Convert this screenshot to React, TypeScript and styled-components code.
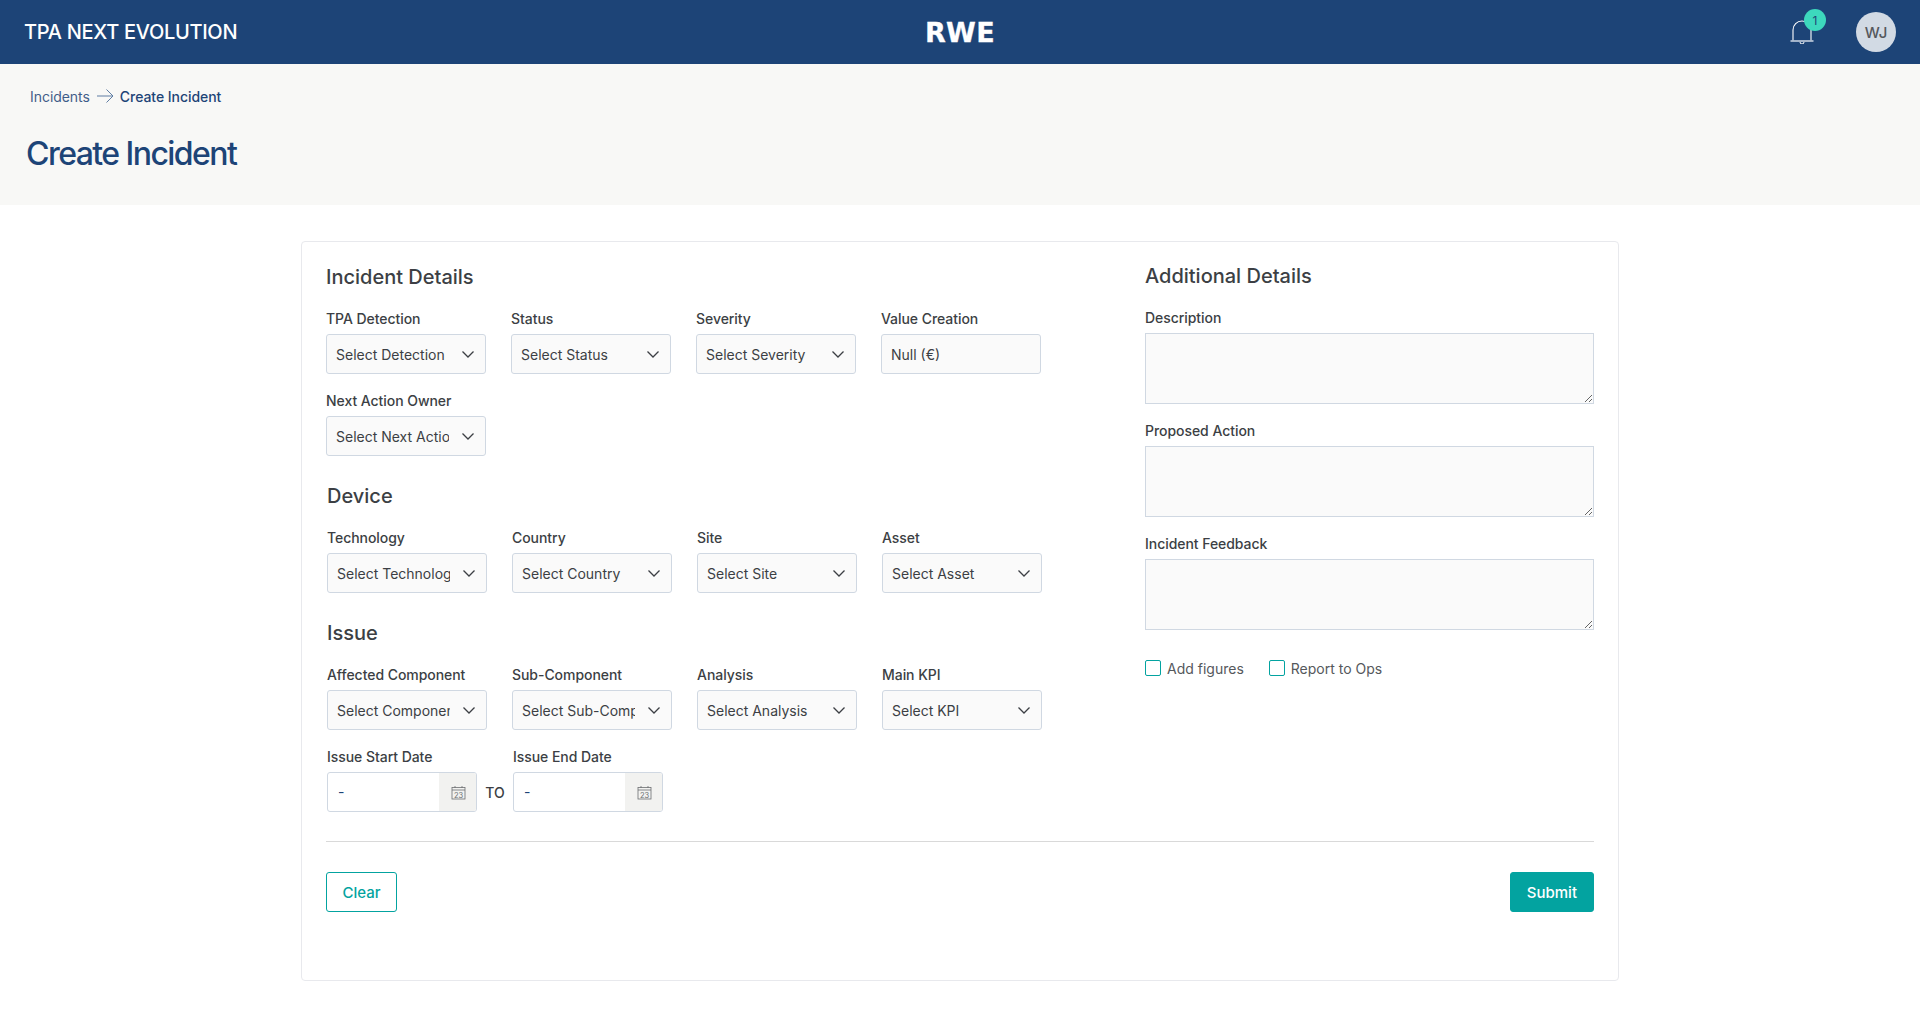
import React from "react";
import styled, { createGlobalStyle } from "styled-components";

const Global = createGlobalStyle`
  html, body { margin: 0; padding: 0; background: #fff; }
  body { font-family: Inter, "Noto Sans", sans-serif; color: #3c3f44; }
  * { box-sizing: border-box; }
`;

const TopBar = styled.header`
  height: 64px;
  background: #1d4477;
  display: grid;
  grid-template-columns: 1fr auto 1fr;
  align-items: center;
  padding: 0 24px;
  color: #fff;
`;
const AppName = styled.div`
  font-size: 20px;
  font-weight: 500;
  letter-spacing: -0.3px;
`;
const Logo = styled.div`
  font-family: "DejaVu Sans", sans-serif;
  font-size: 27px;
  font-weight: 700;
  letter-spacing: 0.3px;
  line-height: 1;
  -webkit-text-stroke: 0.3px #fff;
`;
const TopActions = styled.div`
  display: flex;
  justify-content: flex-end;
  align-items: center;
  gap: 41px;
`;
const BellWrap = styled.div`
  position: relative;
  width: 24px;
  height: 24px;
  margin-right: 1px;
`;
const Badge = styled.span`
  position: absolute;
  left: 14px;
  top: -1px;
  width: 22px;
  height: 22px;
  margin-top: -10px;
  border-radius: 50%;
  background: #3dd8bd;
  color: #1d4477;
  font-size: 12px;
  display: flex;
  align-items: center;
  justify-content: center;
`;
const Avatar = styled.div`
  width: 40px;
  height: 40px;
  border-radius: 50%;
  background: #d2dae4;
  color: #55585c;
  font-size: 15px;
  font-weight: 500;
  display: flex;
  align-items: center;
  justify-content: center;
`;
const PageHead = styled.section`
  height: 141px;
  background: #f8f8f6;
  padding: 23px 26px 0;
`;
const Crumbs = styled.nav`
  display: flex;
  align-items: center;
  height: 18px;
  margin-left: 4px;
  font-size: 14px;
  letter-spacing: -0.05px;
  color: #1d4477;
`;
const CrumbLink = styled.span`
  font-weight: 400;
  opacity: 0.85;
`;
const CrumbCurrent = styled.span`
  font-weight: 500;
`;
const CrumbArrow = styled.svg`
  width: 18px;
  height: 18px;
  margin: 0 6px;
`;
const Title = styled.h1`
  margin: 29px 0 0;
  font-size: 32px;
  line-height: 40px;
  font-weight: 500;
  letter-spacing: -1.55px;
  color: #1d4477;
`;
const Card = styled.form`
  width: 1318px;
  height: 740px;
  margin: 36px 0 0 301px;
  padding: 22px 24px 0;
  border: 1px solid #e8e9ed;
  border-radius: 4px;
  background: #fff;
`;
const Columns = styled.div`
  display: grid;
  grid-template-columns: 819px 449px;
  height: 577px;
`;
const LeftCol = styled.div`
  display: flex;
  flex-direction: column;
  padding-top: 1px;
`;
const RightCol = styled.div`
  display: flex;
  flex-direction: column;
`;
const Section = styled.div<{ $inset?: boolean; $gap?: number }>`
  padding-left: ${(p) => (p.$inset ? 1 : 0)}px;
  margin-top: ${(p) => p.$gap ?? 0}px;
`;
const SectionTitle = styled.h2`
  margin: 0 0 21px;
  font-size: 20px;
  line-height: 24px;
  font-weight: 500;
  color: #3c3f44;
`;
const Row = styled.div`
  display: grid;
  grid-template-columns: repeat(4, 160px);
  column-gap: 25px;
  row-gap: 18px;
`;
const Field = styled.div`
  display: flex;
  flex-direction: column;
`;
const Label = styled.label`
  font-size: 14px;
  line-height: 18px;
  height: 18px;
  margin-bottom: 6px;
  font-weight: 500;
  letter-spacing: -0.05px;
  color: #3c3f44;
  white-space: nowrap;
`;
const SelectBox = styled.div`
  height: 40px;
  width: 160px;
  display: flex;
  align-items: center;
  padding: 0 10px 0 9px;
  background: #fafafa;
  border: 1px solid #d0d8e2;
  border-radius: 3px;
  font-size: 14px;
  color: #3c3f44;
`;
const SelectText = styled.span`
  flex: 1;
  min-width: 0;
  overflow: hidden;
  white-space: nowrap;
`;
const Chevron = styled.svg`
  flex: none;
  width: 14px;
  height: 14px;
  margin-left: 12px;
`;
const DateRow = styled.div`
  display: flex;
  align-items: flex-end;
  margin-top: 18px;
`;
const ToText = styled.span`
  width: 36px;
  height: 40px;
  font-size: 14px;
  font-weight: 500;
  display: flex;
  align-items: center;
  justify-content: center;
`;
const DateBox = styled.div`
  width: 150px;
  height: 40px;
  display: flex;
  border: 1px solid #d0d8e2;
  border-radius: 3px;
  overflow: hidden;
  background: #fff;
`;
const DateValue = styled.span`
  flex: 1;
  padding-left: 10px;
  font-size: 14px;
  line-height: 38px;
  color: #1d4477;
`;
const DateAddon = styled.span`
  width: 37px;
  padding-left: 1px;
  background: #f2f2f0;
  display: flex;
  align-items: center;
  justify-content: center;
`;
const RightField = styled.div`
  display: flex;
  flex-direction: column;
  margin-bottom: 18px;
`;
const TextArea = styled.textarea`
  display: block;
  width: 449px;
  height: 71px;
  background: #fafafa;
  border: 1px solid #d0d8e2;
  border-radius: 0;
  outline: none;
  font-family: inherit;
`;
const Checks = styled.div`
  display: flex;
  gap: 25px;
  margin-top: 10px;
`;
const CheckLabel = styled.label`
  display: flex;
  align-items: center;
  gap: 6px;
  height: 20px;
  font-size: 14px;
  color: #55585c;
`;
const CheckBox = styled.span`
  width: 16px;
  height: 16px;
  border: 1px solid #03a3a0;
  border-radius: 2px;
  background: #fff;
`;
const Divider = styled.hr`
  margin: 0;
  border: 0;
  border-top: 1px solid #d9d9d9;
`;
const Actions = styled.div`
  display: flex;
  justify-content: space-between;
  margin-top: 30px;
`;
const Button = styled.button<{ $primary?: boolean }>`
  height: 40px;
  padding: 0 ${(p) => (p.$primary ? 16 : 15.5)}px;
  border: 1px solid #03a3a0;
  border-radius: 3px;
  background: ${(p) => (p.$primary ? "#03a3a0" : "#fff")};
  color: ${(p) => (p.$primary ? "#fff" : "#03a3a0")};
  font-family: inherit;
  font-size: 15px;
  font-weight: 500;
`;

const ChevronIcon = () => (
  <Chevron viewBox="0 0 14 14" fill="none" stroke="#3c3f44" strokeWidth="1.3">
    <path d="M1.5 4.5 7 10l5.5-5.5" />
  </Chevron>
);

const SelectField = ({ label, text }: { label: string; text: string }) => (
  <Field>
    <Label>{label}</Label>
    <SelectBox>
      <SelectText>{text}</SelectText>
      <ChevronIcon />
    </SelectBox>
  </Field>
);

const ValueField = ({ label, text }: { label: string; text: string }) => (
  <Field>
    <Label>{label}</Label>
    <SelectBox>
      <SelectText>{text}</SelectText>
    </SelectBox>
  </Field>
);

const CalendarIcon = () => (
  <svg width="15" height="15" viewBox="0 0 15 15" fill="none" stroke="#6d6f72" strokeWidth="0.8">
    <rect x="1" y="2.5" width="13" height="11.5" />
    <path d="M1 5h13M4 1v2M11 1v2" />
    <text x="7.5" y="12.6" textAnchor="middle" fontSize="7.5" fill="#6d6f72" stroke="none" fontFamily="Inter">23</text>
  </svg>
);

const DateField = ({ label }: { label: string }) => (
  <Field>
    <Label>{label}</Label>
    <DateBox>
      <DateValue>-</DateValue>
      <DateAddon>
        <CalendarIcon />
      </DateAddon>
    </DateBox>
  </Field>
);

export default function App() {
  return (
    <>
      <Global />
      <TopBar>
        <AppName>TPA NEXT EVOLUTION</AppName>
        <Logo>RWE</Logo>
        <TopActions>
          <BellWrap>
            <svg width="24" height="24" viewBox="0 0 24 24" fill="none" stroke="#fff">
              <path d="M3 20.5V10a9 9 0 0 1 9-9a9 9 0 0 1 9 9v10.5" strokeWidth="1.1" />
              <path d="M0.5 21h23" stroke="#c3cfdf" strokeWidth="1.6" />
              <path d="M10 22a2 2 0 0 0 4 0" strokeWidth="1" />
            </svg>
            <Badge>1</Badge>
          </BellWrap>
          <Avatar>WJ</Avatar>
        </TopActions>
      </TopBar>
      <PageHead>
        <Crumbs>
          <CrumbLink>Incidents</CrumbLink>
          <CrumbArrow viewBox="0 0 18 18" fill="none" stroke="#5f7da3" strokeWidth="1">
            <path d="M1 9h16M10.5 2.5 17 9l-6.5 6.5" />
          </CrumbArrow>
          <CrumbCurrent>Create Incident</CrumbCurrent>
        </Crumbs>
        <Title>Create Incident</Title>
      </PageHead>
      <Card>
        <Columns>
          <LeftCol>
            <Section>
              <SectionTitle>Incident Details</SectionTitle>
              <Row>
                <SelectField label="TPA Detection" text="Select Detection" />
                <SelectField label="Status" text="Select Status" />
                <SelectField label="Severity" text="Select Severity" />
                <ValueField label="Value Creation" text="Null (€)" />
                <SelectField label="Next Action Owner" text="Select Next Action Owner" />
              </Row>
            </Section>
            <Section $inset $gap={28}>
              <SectionTitle>Device</SectionTitle>
              <Row>
                <SelectField label="Technology" text="Select Technology" />
                <SelectField label="Country" text="Select Country" />
                <SelectField label="Site" text="Select Site" />
                <SelectField label="Asset" text="Select Asset" />
              </Row>
            </Section>
            <Section $inset $gap={28}>
              <SectionTitle>Issue</SectionTitle>
              <Row>
                <SelectField label="Affected Component" text="Select Component" />
                <SelectField label="Sub-Component" text="Select Sub-Component" />
                <SelectField label="Analysis" text="Select Analysis" />
                <SelectField label="Main KPI" text="Select KPI" />
              </Row>
              <DateRow>
                <DateField label="Issue Start Date" />
                <ToText>TO</ToText>
                <DateField label="Issue End Date" />
              </DateRow>
            </Section>
          </LeftCol>
          <RightCol>
            <SectionTitle>Additional Details</SectionTitle>
            <RightField>
              <Label>Description</Label>
              <TextArea />
            </RightField>
            <RightField>
              <Label>Proposed Action</Label>
              <TextArea />
            </RightField>
            <RightField>
              <Label>Incident Feedback</Label>
              <TextArea />
            </RightField>
            <Checks>
              <CheckLabel>
                <CheckBox />
                Add figures
              </CheckLabel>
              <CheckLabel>
                <CheckBox />
                Report to Ops
              </CheckLabel>
            </Checks>
          </RightCol>
        </Columns>
        <Divider />
        <Actions>
          <Button type="button">Clear</Button>
          <Button type="button" $primary>
            Submit
          </Button>
        </Actions>
      </Card>
    </>
  );
}
